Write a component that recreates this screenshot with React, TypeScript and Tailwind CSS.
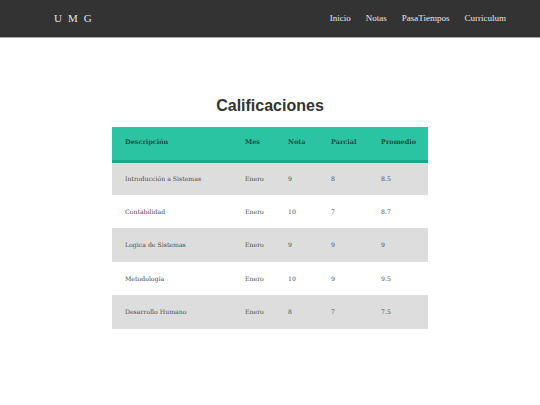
const rows = [
  { desc: 'Introducción a Sistemas', mes: 'Enero', nota: '9', parcial: '8', prom: '8.5' },
  { desc: 'Contabilidad', mes: 'Enero', nota: '10', parcial: '7', prom: '8.7' },
  { desc: 'Logica de Sistemas', mes: 'Enero', nota: '9', parcial: '9', prom: '9' },
  { desc: 'Metodología', mes: 'Enero', nota: '10', parcial: '9', prom: '9.5' },
  { desc: 'Desarrollo Humano', mes: 'Enero', nota: '8', parcial: '7', prom: '7.5' },
]

export default function App() {
  return (
    <div className="min-h-[405px] w-[540px] bg-white font-['Liberation_Serif',serif]">
      <nav className="flex h-[38px] items-center justify-between border-b border-[#a9a9a9] bg-[#333333] pl-[54px] pr-[34px]">
        <span className="text-[11px] tracking-[6px] text-[#e5e5e5]">UMG</span>
        <ul className="flex gap-[15px] text-[9px] text-[#e8e8e8]">
          <li>Inicio</li>
          <li>Notas</li>
          <li>PasaTiempos</li>
          <li>Curriculum</li>
        </ul>
      </nav>

      <h1 className="mt-[58px] text-center font-['Liberation_Sans',sans-serif] text-[16px] font-bold leading-[20px] text-[#333333]">
        Calificaciones
      </h1>

      <table className="mx-auto mt-[11px] w-[316px] border-collapse text-left font-['DejaVu_Serif',serif]">
        <thead>
          <tr className="h-[34px] border-b-[3px] border-[#1fa887] bg-[#2bc4a3] text-[6.5px] font-bold text-[#1d4f43]">
            <th className="w-[120px] pl-[13px]">Descripción</th>
            <th className="w-[43px] pl-[13px]">Mes</th>
            <th className="w-[43px] pl-[13px]">Nota</th>
            <th className="w-[50px] pl-[13px]">Parcial</th>
            <th className="pl-[13px]">Promedio</th>
          </tr>
        </thead>
        <tbody className="text-[6.2px] text-[#4a4a4a]">
          {rows.map((r, i) => (
            <tr key={r.desc} className={`h-[33.5px] ${i % 2 === 0 ? 'bg-[#dddddd]' : 'bg-white'}`}>
              <td className="pl-[13px]">{r.desc}</td>
              <td className="pl-[13px]">{r.mes}</td>
              <td className="pl-[13px]">{r.nota}</td>
              <td className="pl-[13px]">{r.parcial}</td>
              <td className="pl-[13px]">{r.prom}</td>
            </tr>
          ))}
        </tbody>
      </table>
    </div>
  )
}
